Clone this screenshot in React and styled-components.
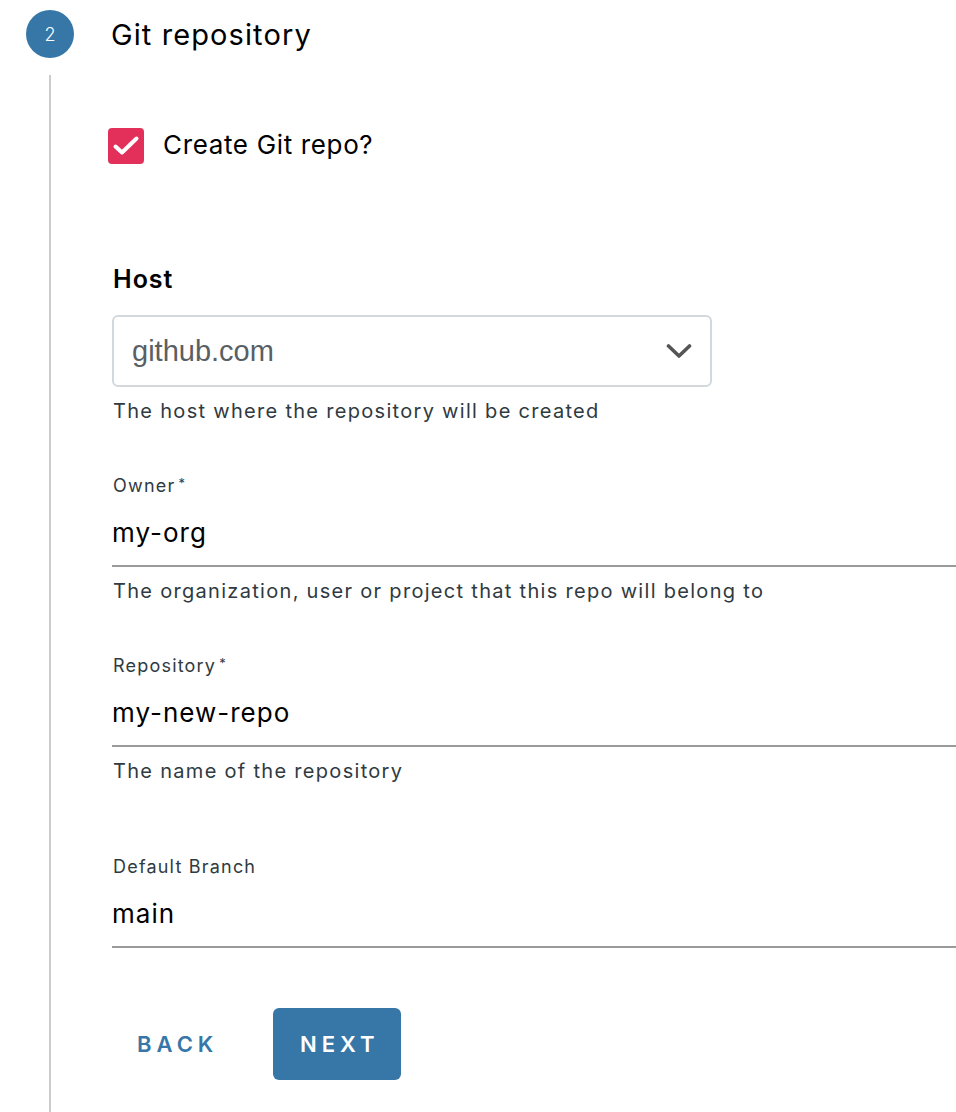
import React, { useState } from "react";
import styled, { createGlobalStyle } from "styled-components";

const GlobalStyle = createGlobalStyle`
  html, body {
    margin: 0;
    padding: 0;
    background: #fff;
    overflow: hidden;
  }
  body {
    font-family: Inter, "Open Sans", sans-serif;
    color: #000;
  }
`;

const fields = [
  {
    id: "owner",
    label: "Owner",
    required: true,
    value: "my-org",
    helper: "The organization, user or project that this repo will belong to",
  },
  {
    id: "repo",
    label: "Repository",
    required: true,
    value: "my-new-repo",
    helper: "The name of the repository",
  },
  {
    id: "branch",
    label: "Default Branch",
    required: false,
    value: "main",
    helper: "",
  },
];

const App = () => {
  const [createRepo, setCreateRepo] = useState(true);
  const [values, setValues] = useState(
    Object.fromEntries(fields.map((f) => [f.id, f.value]))
  );

  return (
    <Page>
      <GlobalStyle />
      <StepHeader>
        <StepNumber>2</StepNumber>
        <StepTitle>Git repository</StepTitle>
      </StepHeader>
      <StepBody>
        <CheckRow onClick={() => setCreateRepo(!createRepo)}>
          <CheckBox checked={createRepo}>
            {createRepo && (
              <svg width="36" height="36" viewBox="0 0 36 36">
                <path
                  d="M7.5 18.5 L14 24.5 L28.5 10.5"
                  fill="none"
                  stroke="#fff"
                  strokeWidth="4"
                  strokeLinecap="round"
                  strokeLinejoin="round"
                />
              </svg>
            )}
          </CheckBox>
          <CheckLabel>Create Git repo?</CheckLabel>
        </CheckRow>

        <HostSection>
          <SectionLabel>Host</SectionLabel>
          <SelectBox>
            <SelectText>github.com</SelectText>
            <svg width="26" height="16" viewBox="0 0 26 16">
              <path
                d="M2.5 3 L13 13 L23.5 3"
                fill="none"
                stroke="#555"
                strokeWidth="3.6"
                strokeLinecap="round"
                strokeLinejoin="round"
              />
            </svg>
          </SelectBox>
          <Helper>The host where the repository will be created</Helper>
        </HostSection>

        {fields.map((f) => (
          <Field key={f.id} last={!f.helper}>
            <FieldLabel>
              {f.label}
              {f.required && <Star>*</Star>}
            </FieldLabel>
            <TextInput
              value={values[f.id]}
              onChange={(e) => setValues({ ...values, [f.id]: e.target.value })}
            />
            {f.helper && <Helper>{f.helper}</Helper>}
          </Field>
        ))}

        <ButtonRow>
          <FlatButton>Back</FlatButton>
          <PrimaryButton>Next</PrimaryButton>
        </ButtonRow>
      </StepBody>
    </Page>
  );
};

export default App;

const Page = styled.div`
  width: 956px;
  height: 1112px;
  padding-top: 10px;
  box-sizing: border-box;
  overflow: hidden;
`;

const StepHeader = styled.div`
  display: flex;
  align-items: center;
  padding-left: 26px;
  height: 48px;
`;

const StepNumber = styled.div`
  width: 48px;
  height: 48px;
  border-radius: 50%;
  background: #3677a8;
  color: #fff;
  font-size: 18px;
  font-weight: 300;
  display: flex;
  align-items: center;
  justify-content: center;
`;

const StepTitle = styled.h2`
  margin: 0 0 0 37px;
  font-size: 29px;
  font-weight: 400;
  letter-spacing: 1.1px;
`;

const StepBody = styled.div`
  margin-top: 17px;
  margin-left: 49px;
  border-left: 2px solid #cccccc;
  padding-left: 57px;
  padding-top: 53px;
  height: 1100px;
`;

const CheckRow = styled.label`
  display: flex;
  align-items: center;
  gap: 19px;
  cursor: pointer;
`;

const CheckBox = styled.span`
  width: 36px;
  height: 36px;
  flex-shrink: 0;
  border-radius: 4px;
  background: ${(p) => (p.checked ? "#e3305a" : "#fff")};
  border: ${(p) => (p.checked ? "none" : "2px solid #999")};
  display: flex;
  align-items: center;
  justify-content: center;
`;

const CheckLabel = styled.span`
  font-size: 26px;
  letter-spacing: 0.65px;
  position: relative;
  top: -2px;
`;

const HostSection = styled.div`
  margin-top: 99px;
  padding-left: 5px;
`;

const SectionLabel = styled.div`
  font-size: 25px;
  font-weight: 600;
  line-height: 32px;
  letter-spacing: 1px;
`;

const SelectBox = styled.div`
  margin-top: 20px;
  margin-left: -1px;
  width: 600px;
  height: 72px;
  box-sizing: border-box;
  border: 2px solid #d3d8dc;
  border-radius: 6px;
  display: flex;
  align-items: center;
  justify-content: space-between;
  padding: 0 18px 0 18px;
`;

const SelectText = styled.span`
  font-family: "Liberation Sans", Arial, sans-serif;
  font-size: 29px;
  color: #5a5f64;
`;

const Helper = styled.div`
  margin-top: 11px;
  font-size: 20px;
  color: #2f3a42;
  letter-spacing: 1.3px;
  line-height: 26px;
`;

const Field = styled.div`
  margin-top: ${(p) => (p.last ? "71px" : "50px")};
  padding-left: 5px;
`;

const FieldLabel = styled.div`
  font-size: 18px;
  color: #2f3a42;
  line-height: 24px;
  letter-spacing: 1.2px;
`;

const Star = styled.span`
  font-size: 13px;
  vertical-align: top;
  margin-left: 3px;
  position: relative;
  top: -3px;
`;

const TextInput = styled.input`
  display: block;
  margin-top: 20px;
  margin-left: -1px;
  width: 900px;
  box-sizing: border-box;
  border: none;
  border-bottom: 2px solid #9a9a9a;
  outline: none;
  padding: 0 0 17px 0;
  font-family: Inter, "Open Sans", sans-serif;
  font-size: 26px;
  line-height: 30px;
  letter-spacing: 1px;
  color: #000;
  background: transparent;
`;

const ButtonRow = styled.div`
  margin-top: 60px;
  display: flex;
  align-items: center;
  gap: 31px;
  padding-left: 5px;
`;

const FlatButton = styled.button`
  background: transparent;
  border: none;
  height: 72px;
  padding: 0 24px;
  font-family: Inter, "Open Sans", sans-serif;
  font-size: 22px;
  font-weight: 600;
  letter-spacing: 5px;
  text-transform: uppercase;
  color: #3677a8;
  cursor: pointer;
`;

const PrimaryButton = styled(FlatButton)`
  background: #3677a8;
  color: #fff;
  border-radius: 6px;
  width: 128px;
  padding: 0 0 0 5px;
`;
